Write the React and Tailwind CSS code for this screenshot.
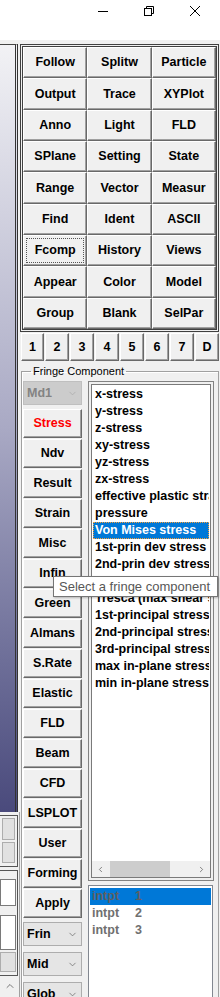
import { ChevronDown, ChevronLeft, ChevronRight, ChevronUp } from "lucide-react";

const topButtons = [
  "Follow", "Splitw", "Particle",
  "Output", "Trace", "XYPlot",
  "Anno", "Light", "FLD",
  "SPlane", "Setting", "State",
  "Range", "Vector", "Measur",
  "Find", "Ident", "ASCII",
  "Fcomp", "History", "Views",
  "Appear", "Color", "Model",
  "Group", "Blank", "SelPar",
];

const tabs = ["1", "2", "3", "4", "5", "6", "7", "D"];

const sideButtons = [
  "Stress", "Ndv", "Result", "Strain", "Misc", "Infin", "Green", "Almans",
  "S.Rate", "Elastic", "FLD", "Beam", "CFD", "LSPLOT", "User", "Forming", "Apply",
];

const components = [
  "x-stress",
  "y-stress",
  "z-stress",
  "xy-stress",
  "yz-stress",
  "zx-stress",
  "effective plastic strain",
  "pressure",
  "Von Mises stress",
  "1st-prin dev stress",
  "2nd-prin dev stress",
  "3rd-prin dev stress",
  "Tresca (max shear stress)",
  "1st-principal stress",
  "2nd-principal stress",
  "3rd-principal stress",
  "max in-plane stress",
  "min in-plane stress",
];

// classic 3d button, text colour added per use
const btnBase =
  "shrink-0 flex items-center justify-center bg-[#f0f0f0] border border-t-white border-l-white border-r-[#696969] border-b-[#696969] shadow-[inset_-1px_-1px_0_#a0a0a0] font-bold text-[12.5px] whitespace-nowrap overflow-hidden";
const btn = btnBase + " text-black";

function Combo({ label, disabled }) {
  return (
    <div
      className={
        disabled
          ? "shrink-0 h-[24px] flex items-center justify-between border border-[#bfbfbf] bg-[#cccccc] pl-[3px] pr-[3px] font-bold text-[12.5px] text-[#838383]"
          : "shrink-0 h-[24px] flex items-center justify-between border border-[#adadad] bg-[#e5e5e5] pl-[3px] pr-[3px] font-bold text-[12.5px] text-black"
      }
    >
      <span>{label}</span>
      <ChevronDown size={11} strokeWidth={1.5} color={disabled ? "#a8a8a8" : "#606060"} />
    </div>
  );
}

function TitleBar() {
  return (
    <div className="h-[40px] bg-white flex justify-end pr-[2px]">
      <div className="w-[46px] h-[21px] flex items-center justify-center">
        <svg width="10" height="10" viewBox="0 0 10 10">
          <line x1="0" y1="5.5" x2="10" y2="5.5" stroke="#000" strokeWidth="1" />
        </svg>
      </div>
      <div className="w-[46px] h-[21px] flex items-center justify-center">
        <svg width="10" height="10" viewBox="0 0 10 10" fill="none" stroke="#000" strokeWidth="1">
          <rect x="0.5" y="2.5" width="7" height="7" />
          <path d="M2.5 2.5 V0.5 H9.5 V7.5 H7.5" />
        </svg>
      </div>
      <div className="w-[46px] h-[21px] flex items-center justify-center">
        <svg width="10" height="10" viewBox="0 0 10 10" stroke="#000" strokeWidth="1">
          <line x1="0" y1="0" x2="10" y2="10" />
          <line x1="10" y1="0" x2="0" y2="10" />
        </svg>
      </div>
    </div>
  );
}

function LeftPane() {
  return (
    <div className="w-[20px] shrink-0 flex flex-col">
      <div className="shrink-0 w-[18px] h-[768px] border-t border-[#444] border-r-[3px] border-r-[#333] border-double bg-gradient-to-b from-[#f2f2f5] via-[#a9a9c4] to-[#4a4a7c]" />
      <div className="flex-1 border-r border-[#a0a0a0] pt-[3px]">
        <div className="h-[52px] w-[18px] border-y border-r border-[#555] p-[2px] flex flex-col gap-[2px]">
          <div className="h-[22px] bg-[#e1e1e1] border border-[#adadad]" />
          <div className="h-[21px] bg-[#e1e1e1] border border-[#adadad]" />
        </div>
        <div className="mt-[3px] h-[106px] w-[18px] border-y border-r border-[#555] flex flex-col">
          <div className="mt-[8px] h-[27px] w-[16px] bg-white border border-[#7a7a7a]" />
          <div className="mt-[9px] h-[35px] w-[16px] bg-white border border-[#7a7a7a]" />
          <div className="mt-[2px] h-[20px] w-[16px] bg-[#e1e1e1] border border-[#adadad]" />
        </div>
        <div className="mt-[4px] flex justify-center">
          <ChevronUp size={12} strokeWidth={1.5} color="#505050" />
        </div>
      </div>
    </div>
  );
}

function ComponentList() {
  return (
    <div className="shrink-0 w-[126px] h-[500px] border border-[#828282] p-[2px] bg-[#f0f0f0]">
      <div className="h-full border border-[#7a7a7a] bg-white flex flex-col">
        <div className="flex-1 overflow-hidden pt-[1px] pl-[1px] pr-[1px]">
          {components.map((c) => (
            <div
              key={c}
              className={
                c === "Von Mises stress"
                  ? "h-[17px] leading-[17px] pl-[2px] bg-[#0078d7] text-white font-bold text-[12.5px] whitespace-nowrap overflow-hidden outline-1 outline-dotted outline-offset-[-1px] outline-[#f5a03c]"
                  : "h-[17px] leading-[17px] pl-[2px] text-black font-bold text-[12.5px] whitespace-nowrap overflow-hidden"
              }
            >
              {c}
            </div>
          ))}
        </div>
        <div className="shrink-0 h-[16px] bg-[#f0f0f0] flex items-center">
          <div className="w-[17px] flex justify-center">
            <ChevronLeft size={9} strokeWidth={2} color="#606060" />
          </div>
          <div className="ml-[1px] w-[60px] h-[16px] bg-[#cdcdcd]" />
          <div className="flex-1" />
          <div className="w-[17px] flex justify-center">
            <ChevronRight size={9} strokeWidth={2} color="#606060" />
          </div>
        </div>
      </div>
    </div>
  );
}

function IntptList() {
  return (
    <div className="shrink-0 mt-[4px] w-[125px] h-[120px] border border-[#828790] bg-white pt-[2px] px-[1px]">
      {["1", "2", "3"].map((n) => (
        <div
          key={n}
          className={
            n === "1"
              ? "h-[17px] leading-[17px] pl-[2px] bg-[#0078d7] text-[#5f5f5f] font-bold text-[12.5px] flex"
              : "h-[17px] leading-[17px] pl-[2px] text-[#707070] font-bold text-[12.5px] flex"
          }
        >
          <span className="w-[43px]">intpt</span>
          <span>{n}</span>
        </div>
      ))}
    </div>
  );
}

export default function App() {
  return (
    <div className="w-[220px] h-[997px] overflow-hidden bg-[#f0f0f0] relative font-['Liberation_Sans',Arial,sans-serif]">
      <TitleBar />
      <div className="flex pt-[4px] h-[957px]">
        <LeftPane />
        <div className="w-[200px] shrink-0 flex flex-col">
          <div className="shrink-0 w-[199px] h-[288px] border-[3px] border-double border-[#404040] grid grid-cols-3 grid-rows-9">
            {topButtons.map((b) => (
              <div key={b} className={btn}>
                {b === "Fcomp" ? (
                  <span className="w-[58px] h-[25px] flex items-center justify-center border border-dotted border-[#555]">
                    {b}
                  </span>
                ) : (
                  b
                )}
              </div>
            ))}
          </div>
          <div className="shrink-0 ml-[1px] mt-[1px] flex gap-[1px]">
            {tabs.map((t, i) => (
              <div
                key={t}
                className={
                  i === 0
                    ? "w-[23px] h-[28px] " + btn
                    : "w-[24px] h-[28px] " + btn
                }
              >
                {t}
              </div>
            ))}
          </div>
          <fieldset className="shrink-0 ml-[1px] mt-[3px] w-[198px] h-[700px] border border-[#a0a0a0] shadow-[inset_1px_1px_0_#fff] pl-[1px]">
            <legend className="ml-[8px] px-[2px] h-[14px] leading-[14px] text-[11px] text-black">
              Fringe Component
            </legend>
            <div className="flex pt-[3px] gap-[6px]">
              <div className="w-[59px] shrink-0 flex flex-col">
                <Combo label="Md1" disabled />
                <div className="mt-[4px] flex flex-col gap-[1px]">
                  {sideButtons.map((b) => (
                    <div
                      key={b}
                      className={
                        b === "Stress"
                          ? "h-[29px] " + btnBase + " text-[#ff0000]"
                          : "h-[29px] " + btn
                      }
                    >
                      {b}
                    </div>
                  ))}
                </div>
                <div className="mt-[4px] flex flex-col gap-[6px]">
                  <Combo label="Frin" />
                  <Combo label="Mid" />
                  <Combo label="Glob" />
                </div>
              </div>
              <div className="flex flex-col">
                <ComponentList />
                <IntptList />
              </div>
            </div>
          </fieldset>
        </div>
      </div>
      <div className="absolute left-[53px] top-[576px] w-[165px] h-[21px] border border-[#767676] bg-white shadow-[1px_1px_2px_rgba(0,0,0,0.25)] pl-[5px] leading-[19px] text-[13px] text-[#575757] whitespace-nowrap">
        Select a fringe component
      </div>
    </div>
  );
}
